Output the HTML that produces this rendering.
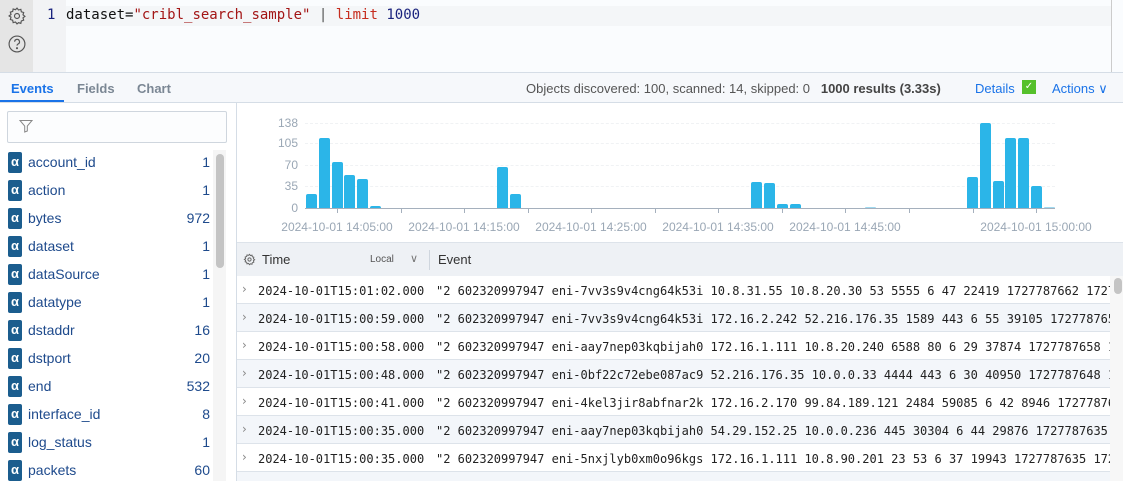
<!DOCTYPE html>
<html style="width:1123px;height:481px;overflow:hidden"><head><meta charset="utf-8"><style>
*{box-sizing:border-box;margin:0;padding:0}
body{width:1123px;height:481px;overflow:hidden;background:#fff;font-family:"Liberation Sans",sans-serif;position:relative}
.a{position:absolute}
.mono{font-family:"DejaVu Sans Mono","Liberation Mono",monospace}
.fld{position:absolute;left:0;width:212px;height:28px}
.fld .b{position:absolute;left:8px;top:4px;width:14px;height:21px;background:#1b5d8e;border-radius:2px;color:#fff;font-size:13px;font-weight:bold;text-align:center;line-height:20px}
.fld .n{position:absolute;left:28px;top:6px;font-size:14px;color:#1e4a8c}
.fld .c{position:absolute;right:2px;top:6px;font-size:14px;color:#1e4a8c}
.bar{position:absolute;width:11px;background:#2bb5e8;border-radius:2px 2px 0 0}
.yl{position:absolute;right:825px;font-size:12px;color:#9aa7b5}
.xl{position:absolute;top:220px;font-size:12px;color:#9aa7b5;white-space:nowrap;transform:translateX(-50%)}
.tk{position:absolute;top:208px;width:1px;height:5px;background:#a5b0bd}
.gl{position:absolute;left:305px;width:750px;border-top:1px dashed #f0f2f4}
.row{position:absolute;left:237px;width:873px;height:28px;border-bottom:1px solid #dde3ea;font-size:12px;color:#222;white-space:nowrap;overflow:hidden}
.row .ch{position:absolute;left:5px;top:6px;color:#888;font-size:12px;font-family:"DejaVu Sans",sans-serif}
.row .t{position:absolute;left:21px;top:8px}
.row .e{position:absolute;left:199px;top:8px}
</style></head><body>
<div class="a" style="left:0;top:0;width:33px;height:72px;background:#e5e5e5"></div>
<div class="a" style="left:33px;top:0;width:33px;height:72px;background:#f2f3f5"></div>
<div class="a" style="left:66px;top:0;width:1057px;height:72px;background:#fafcfe"></div>
<div class="a" style="left:66px;top:6px;width:1045px;height:20px;background:#f4f6f8"></div>
<div class="a" style="left:1111px;top:0;width:1px;height:72px;background:#ccc"></div>
<svg class="a" style="left:7px;top:6px" width="20" height="20" viewBox="0 0 24 24" fill="none" stroke="#555" stroke-width="1.4"><circle cx="12" cy="12" r="3"/><path d="M12 2.5l1.8 2.3 2.8-.8.6 2.9 2.8.9-.8 2.8 2.3 1.8-2.3 1.8.8 2.8-2.8.9-.6 2.9-2.8-.8L12 21.5l-1.8-2.3-2.8.8-.6-2.9-2.8-.9.8-2.8L2.5 12l2.3-1.8-.8-2.8 2.8-.9.6-2.9 2.8.8z"/></svg>
<svg class="a" style="left:7px;top:34px" width="20" height="20" viewBox="0 0 24 24" fill="none" stroke="#555" stroke-width="1.4"><circle cx="12" cy="12" r="9.5"/><path d="M9.2 9.3a2.9 2.9 0 1 1 4.2 2.6c-.9.5-1.4 1-1.4 2.1"/><circle cx="12" cy="17" r=".6" fill="#555"/></svg>
<div class="a mono" style="left:47px;top:7px;font-size:14px;color:#1a237e">1</div>
<div class="a mono" style="left:66px;top:7px;font-size:14px;color:#111;white-space:pre">dataset=<span style="color:#a31515">"cribl_search_sample"</span> <span style="color:#555">|</span> <span style="color:#c62d1f">limit</span> <span style="color:#1a237e">1000</span></div>
<div class="a" style="left:0;top:72px;width:1123px;height:31px;background:#f6f8fb;border-top:1px solid #d5dde6;border-bottom:1px solid #d5dde6"></div>
<div class="a" style="left:11px;top:81px;font-size:13px;color:#1a73e8;font-weight:bold">Events</div>
<div class="a" style="left:0;top:100px;width:64px;height:2px;background:#1a73e8"></div>
<div class="a" style="left:77px;top:81px;font-size:13px;color:#7b8794;font-weight:bold">Fields</div>
<div class="a" style="left:137px;top:81px;font-size:13px;color:#7b8794;font-weight:bold">Chart</div>
<div class="a" style="left:526px;top:81px;font-size:13px;color:#555;white-space:nowrap">Objects discovered: 100, scanned: 14, skipped: 0 &nbsp; <b style="color:#444">1000 results (3.33s)</b></div>
<div class="a" style="left:975px;top:81px;font-size:13px;color:#1a73e8">Details</div>
<div class="a" style="left:1022px;top:80px;width:14px;height:14px;background:#55c02b;color:#fff;font-size:10px;text-align:center;line-height:14px">✓</div>
<div class="a" style="left:1052px;top:81px;font-size:13px;color:#1a73e8">Actions ∨</div>
<div class="a" style="left:236px;top:103px;width:1px;height:378px;background:#d5dde6"></div>
<div class="a" style="left:7px;top:111px;width:220px;height:32px;border:1px solid #cfd6de;border-radius:2px;background:#fcfdfe"></div>
<svg class="a" style="left:19px;top:119px" width="14" height="14" viewBox="0 0 14 14" fill="none" stroke="#888" stroke-width="1"><path d="M1 1.5h12L8.3 7v5L5.7 13V7z"/></svg>
<div class="a" style="left:213px;top:150px;width:13px;height:331px;background:#f5f5f5"></div>
<div class="a" style="left:216px;top:154px;width:8px;height:114px;background:#c4c4c4;border-radius:4px"></div>
<div class="fld" style="top:148px"><div class="b">α</div><div class="n">account_id</div><div class="c">1</div></div>
<div class="fld" style="top:176px"><div class="b">α</div><div class="n">action</div><div class="c">1</div></div>
<div class="fld" style="top:204px"><div class="b">α</div><div class="n">bytes</div><div class="c">972</div></div>
<div class="fld" style="top:232px"><div class="b">α</div><div class="n">dataset</div><div class="c">1</div></div>
<div class="fld" style="top:260px"><div class="b">α</div><div class="n">dataSource</div><div class="c">1</div></div>
<div class="fld" style="top:288px"><div class="b">α</div><div class="n">datatype</div><div class="c">1</div></div>
<div class="fld" style="top:316px"><div class="b">α</div><div class="n">dstaddr</div><div class="c">16</div></div>
<div class="fld" style="top:344px"><div class="b">α</div><div class="n">dstport</div><div class="c">20</div></div>
<div class="fld" style="top:372px"><div class="b">α</div><div class="n">end</div><div class="c">532</div></div>
<div class="fld" style="top:400px"><div class="b">α</div><div class="n">interface_id</div><div class="c">8</div></div>
<div class="fld" style="top:428px"><div class="b">α</div><div class="n">log_status</div><div class="c">1</div></div>
<div class="fld" style="top:456px"><div class="b">α</div><div class="n">packets</div><div class="c">60</div></div>
<div class="gl" style="top:123px"></div><div class="gl" style="top:143px"></div><div class="gl" style="top:165px"></div><div class="gl" style="top:186px"></div>
<div class="yl" style="top:116px">138</div><div class="yl" style="top:136px">105</div><div class="yl" style="top:158px">70</div><div class="yl" style="top:179px">35</div><div class="yl" style="top:201px">0</div>
<div class="a" style="left:305px;top:208px;width:750px;height:1px;background:#a5b0bd"></div>
<div class="bar" style="left:306px;top:194px;height:14px"></div>
<div class="bar" style="left:319px;top:138px;height:70px"></div>
<div class="bar" style="left:332px;top:162px;height:46px"></div>
<div class="bar" style="left:344px;top:175px;height:33px"></div>
<div class="bar" style="left:357px;top:179px;height:29px"></div>
<div class="bar" style="left:370px;top:206px;height:2px"></div>
<div class="bar" style="left:497px;top:167px;height:41px"></div>
<div class="bar" style="left:510px;top:194px;height:14px"></div>
<div class="bar" style="left:751px;top:182px;height:26px"></div>
<div class="bar" style="left:764px;top:183px;height:25px"></div>
<div class="bar" style="left:777px;top:204px;height:4px"></div>
<div class="bar" style="left:790px;top:204px;height:4px"></div>
<div class="bar" style="left:865px;top:207px;height:1px;background:#9fd9f0"></div>
<div class="bar" style="left:967px;top:177px;height:31px"></div>
<div class="bar" style="left:980px;top:123px;height:85px"></div>
<div class="bar" style="left:993px;top:181px;height:27px"></div>
<div class="bar" style="left:1005px;top:138px;height:70px"></div>
<div class="bar" style="left:1018px;top:138px;height:70px"></div>
<div class="bar" style="left:1031px;top:186px;height:22px"></div>
<div class="bar" style="left:1044px;top:207px;height:1px;background:#9fd9f0"></div>
<div class="tk" style="left:337px"></div><div class="tk" style="left:401px"></div><div class="tk" style="left:464px"></div><div class="tk" style="left:528px"></div><div class="tk" style="left:591px"></div><div class="tk" style="left:655px"></div><div class="tk" style="left:718px"></div><div class="tk" style="left:782px"></div><div class="tk" style="left:845px"></div><div class="tk" style="left:909px"></div><div class="tk" style="left:973px"></div><div class="tk" style="left:1036px"></div>
<div class="xl" style="left:337px">2024-10-01 14:05:00</div>
<div class="xl" style="left:464px">2024-10-01 14:15:00</div>
<div class="xl" style="left:591px">2024-10-01 14:25:00</div>
<div class="xl" style="left:718px">2024-10-01 14:35:00</div>
<div class="xl" style="left:845px">2024-10-01 14:45:00</div>
<div class="xl" style="left:1036px">2024-10-01 15:00:00</div>
<div class="a" style="left:237px;top:242px;width:886px;height:34px;background:#eef1f5;border-top:1px solid #dde3ea"></div>
<svg class="a" style="left:243px;top:253px" width="13" height="13" viewBox="0 0 24 24" fill="none" stroke="#666" stroke-width="1.8"><circle cx="12" cy="12" r="3"/><path d="M12 2.5l1.8 2.3 2.8-.8.6 2.9 2.8.9-.8 2.8 2.3 1.8-2.3 1.8.8 2.8-2.8.9-.6 2.9-2.8-.8L12 21.5l-1.8-2.3-2.8.8-.6-2.9-2.8-.9.8-2.8L2.5 12l2.3-1.8-.8-2.8 2.8-.9.6-2.9 2.8.8z"/></svg>
<div class="a" style="left:262px;top:252px;font-size:13px;color:#333">Time</div>
<div class="a" style="left:370px;top:254px;font-size:10px;color:#555">Local</div>
<div class="a" style="left:410px;top:252px;font-size:11px;color:#777">∨</div>
<div class="a" style="left:429px;top:250px;width:1px;height:20px;background:#cfd6de"></div>
<div class="a" style="left:438px;top:252px;font-size:13px;color:#333">Event</div>
<div class="a" style="left:1110px;top:276px;width:13px;height:205px;background:#f7f7f7"></div>
<div class="a" style="left:1114px;top:278px;width:8px;height:16px;background:#c4c4c4;border-radius:4px"></div>
<div class="row mono" style="top:276px;background:#fff"><span class="ch">›</span><span class="t">2024-10-01T15:01:02.000</span><span class="e">"2 602320997947 eni-7vv3s9v4cng64k53i 10.8.31.55 10.8.20.30 53 5555 6 47 22419 1727787662 1727</span></div>
<div class="row mono" style="top:304px;background:#f3f6fa"><span class="ch">›</span><span class="t">2024-10-01T15:00:59.000</span><span class="e">"2 602320997947 eni-7vv3s9v4cng64k53i 172.16.2.242 52.216.176.35 1589 443 6 55 39105 172778765</span></div>
<div class="row mono" style="top:332px;background:#fff"><span class="ch">›</span><span class="t">2024-10-01T15:00:58.000</span><span class="e">"2 602320997947 eni-aay7nep03kqbijah0 172.16.1.111 10.8.20.240 6588 80 6 29 37874 1727787658 1</span></div>
<div class="row mono" style="top:360px;background:#f3f6fa"><span class="ch">›</span><span class="t">2024-10-01T15:00:48.000</span><span class="e">"2 602320997947 eni-0bf22c72ebe087ac9 52.216.176.35 10.0.0.33 4444 443 6 30 40950 1727787648 1</span></div>
<div class="row mono" style="top:388px;background:#fff"><span class="ch">›</span><span class="t">2024-10-01T15:00:41.000</span><span class="e">"2 602320997947 eni-4kel3jir8abfnar2k 172.16.2.170 99.84.189.121 2484 59085 6 42 8946 17277876</span></div>
<div class="row mono" style="top:416px;background:#f3f6fa"><span class="ch">›</span><span class="t">2024-10-01T15:00:35.000</span><span class="e">"2 602320997947 eni-aay7nep03kqbijah0 54.29.152.25 10.0.0.236 445 30304 6 44 29876 1727787635 </span></div>
<div class="row mono" style="top:444px;background:#fff"><span class="ch">›</span><span class="t">2024-10-01T15:00:35.000</span><span class="e">"2 602320997947 eni-5nxjlyb0xm0o96kgs 172.16.1.111 10.8.90.201 23 53 6 37 19943 1727787635 172</span></div>
<div class="row mono" style="top:472px;height:9px;background:#f3f6fa;border-bottom:none"></div>
</body></html>
